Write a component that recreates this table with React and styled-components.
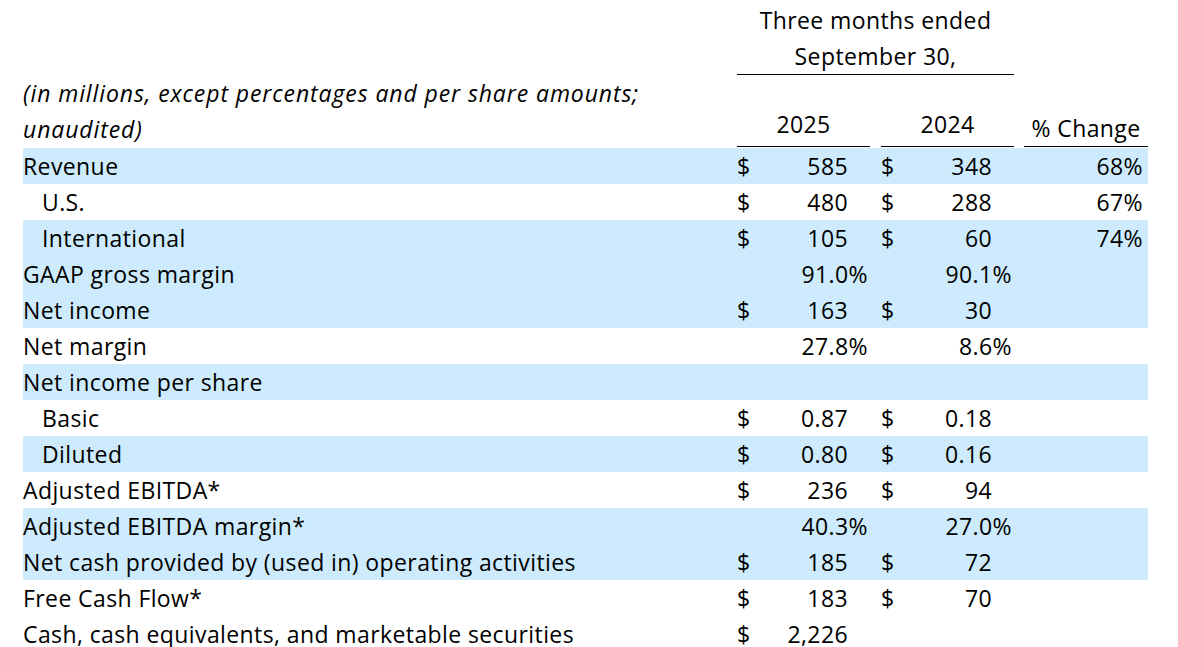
import React from "react";
import styled, { createGlobalStyle } from "styled-components";

const Global = createGlobalStyle`
  html, body { margin: 0; padding: 0; background: #fff; }
  body { font-family: "Open Sans", "Noto Sans", sans-serif; color: #000; }
`;

const COLS = "714px 133px 11px 133px 10px 124px";
const SHADE = "#cdebfc";

const Page = styled.div`
  padding: 2px 0 0 23px;
  font-size: 23px;
  letter-spacing: 0.4px;
  line-height: 36px;
  width: 1125px;
`;

const Header = styled.div`
  display: grid;
  grid-template-columns: ${COLS};
  grid-template-rows: auto auto;
`;

const Period = styled.div`
  grid-column: 2 / 5;
  grid-row: 1;
  text-align: center;
  border-bottom: 1px solid #000;
`;

const Caption = styled.div`
  grid-column: 1;
  grid-row: 2;
  font-style: italic;
  letter-spacing: 0.9px;
  padding-bottom: 1px;
  white-space: nowrap;
`;

const ColHead = styled.div`
  grid-column: ${(p) => p.$col};
  grid-row: 2;
  align-self: end;
  text-align: center;
  border-bottom: 1px solid #000;
  margin-bottom: 1px;
  padding-bottom: ${(p) => p.$pb}px;
`;

const Row = styled.div`
  display: grid;
  grid-template-columns: ${COLS};
  height: 36px;
  background: ${(p) => (p.$shade ? SHADE : "transparent")};
`;

const Label = styled.div`
  grid-column: 1;
  padding-left: ${(p) => (p.$indent ? 19 : 0)}px;
  white-space: nowrap;
`;

const Amount = styled.div`
  grid-column: ${(p) => p.$col};
  display: flex;
`;

const Dollar = styled.span`
  width: 20px;
`;

const Value = styled.span`
  margin-left: auto;
  padding-right: ${(p) => (p.$pct ? 2 : 22)}px;
`;

const Change = styled.div`
  grid-column: 6;
  text-align: right;
  padding-right: 5px;
`;

const rows = [
  { label: "Revenue", shade: true, a: "585", b: "348", c: "68%", d: true },
  { label: "U.S.", indent: true, a: "480", b: "288", c: "67%", d: true },
  { label: "International", indent: true, shade: true, a: "105", b: "60", c: "74%", d: true },
  { label: "GAAP gross margin", shade: true, a: "91.0%", b: "90.1%", pct: true },
  { label: "Net income", shade: true, a: "163", b: "30", d: true },
  { label: "Net margin", a: "27.8%", b: "8.6%", pct: true },
  { label: "Net income per share", shade: true },
  { label: "Basic", indent: true, a: "0.87", b: "0.18", d: true },
  { label: "Diluted", indent: true, shade: true, a: "0.80", b: "0.16", d: true },
  { label: "Adjusted EBITDA*", a: "236", b: "94", d: true },
  { label: "Adjusted EBITDA margin*", shade: true, a: "40.3%", b: "27.0%", pct: true },
  { label: "Net cash provided by (used in) operating activities", shade: true, a: "185", b: "72", d: true },
  { label: "Free Cash Flow*", a: "183", b: "70", d: true },
  { label: "Cash, cash equivalents, and marketable securities", a: "2,226", d: true },
];

function Cell({ col, value, dollar, pct }) {
  return (
    <Amount $col={col}>
      <Dollar>{value && dollar ? "$" : ""}</Dollar>
      {value && <Value $pct={pct}>{value}</Value>}
    </Amount>
  );
}

export default function App() {
  return (
    <>
      <Global />
      <Page>
        <Header>
          <Period>
            Three months ended
            <br />
            September 30,
          </Period>
          <Caption>
            (in millions, except percentages and per share amounts;
            <br />
            unaudited)
          </Caption>
          <ColHead $col={2} $pb={4}>2025</ColHead>
          <ColHead $col={4} $pb={4}>2024</ColHead>
          <ColHead $col={6} $pb={0}>% Change</ColHead>
        </Header>
        {rows.map((r) => (
          <Row key={r.label} $shade={r.shade}>
            <Label $indent={r.indent}>{r.label}</Label>
            <Cell col={2} value={r.a} dollar={r.d} pct={r.pct} />
            <Cell col={4} value={r.b} dollar={r.d} pct={r.pct} />
            {r.c && <Change>{r.c}</Change>}
          </Row>
        ))}
      </Page>
    </>
  );
}
